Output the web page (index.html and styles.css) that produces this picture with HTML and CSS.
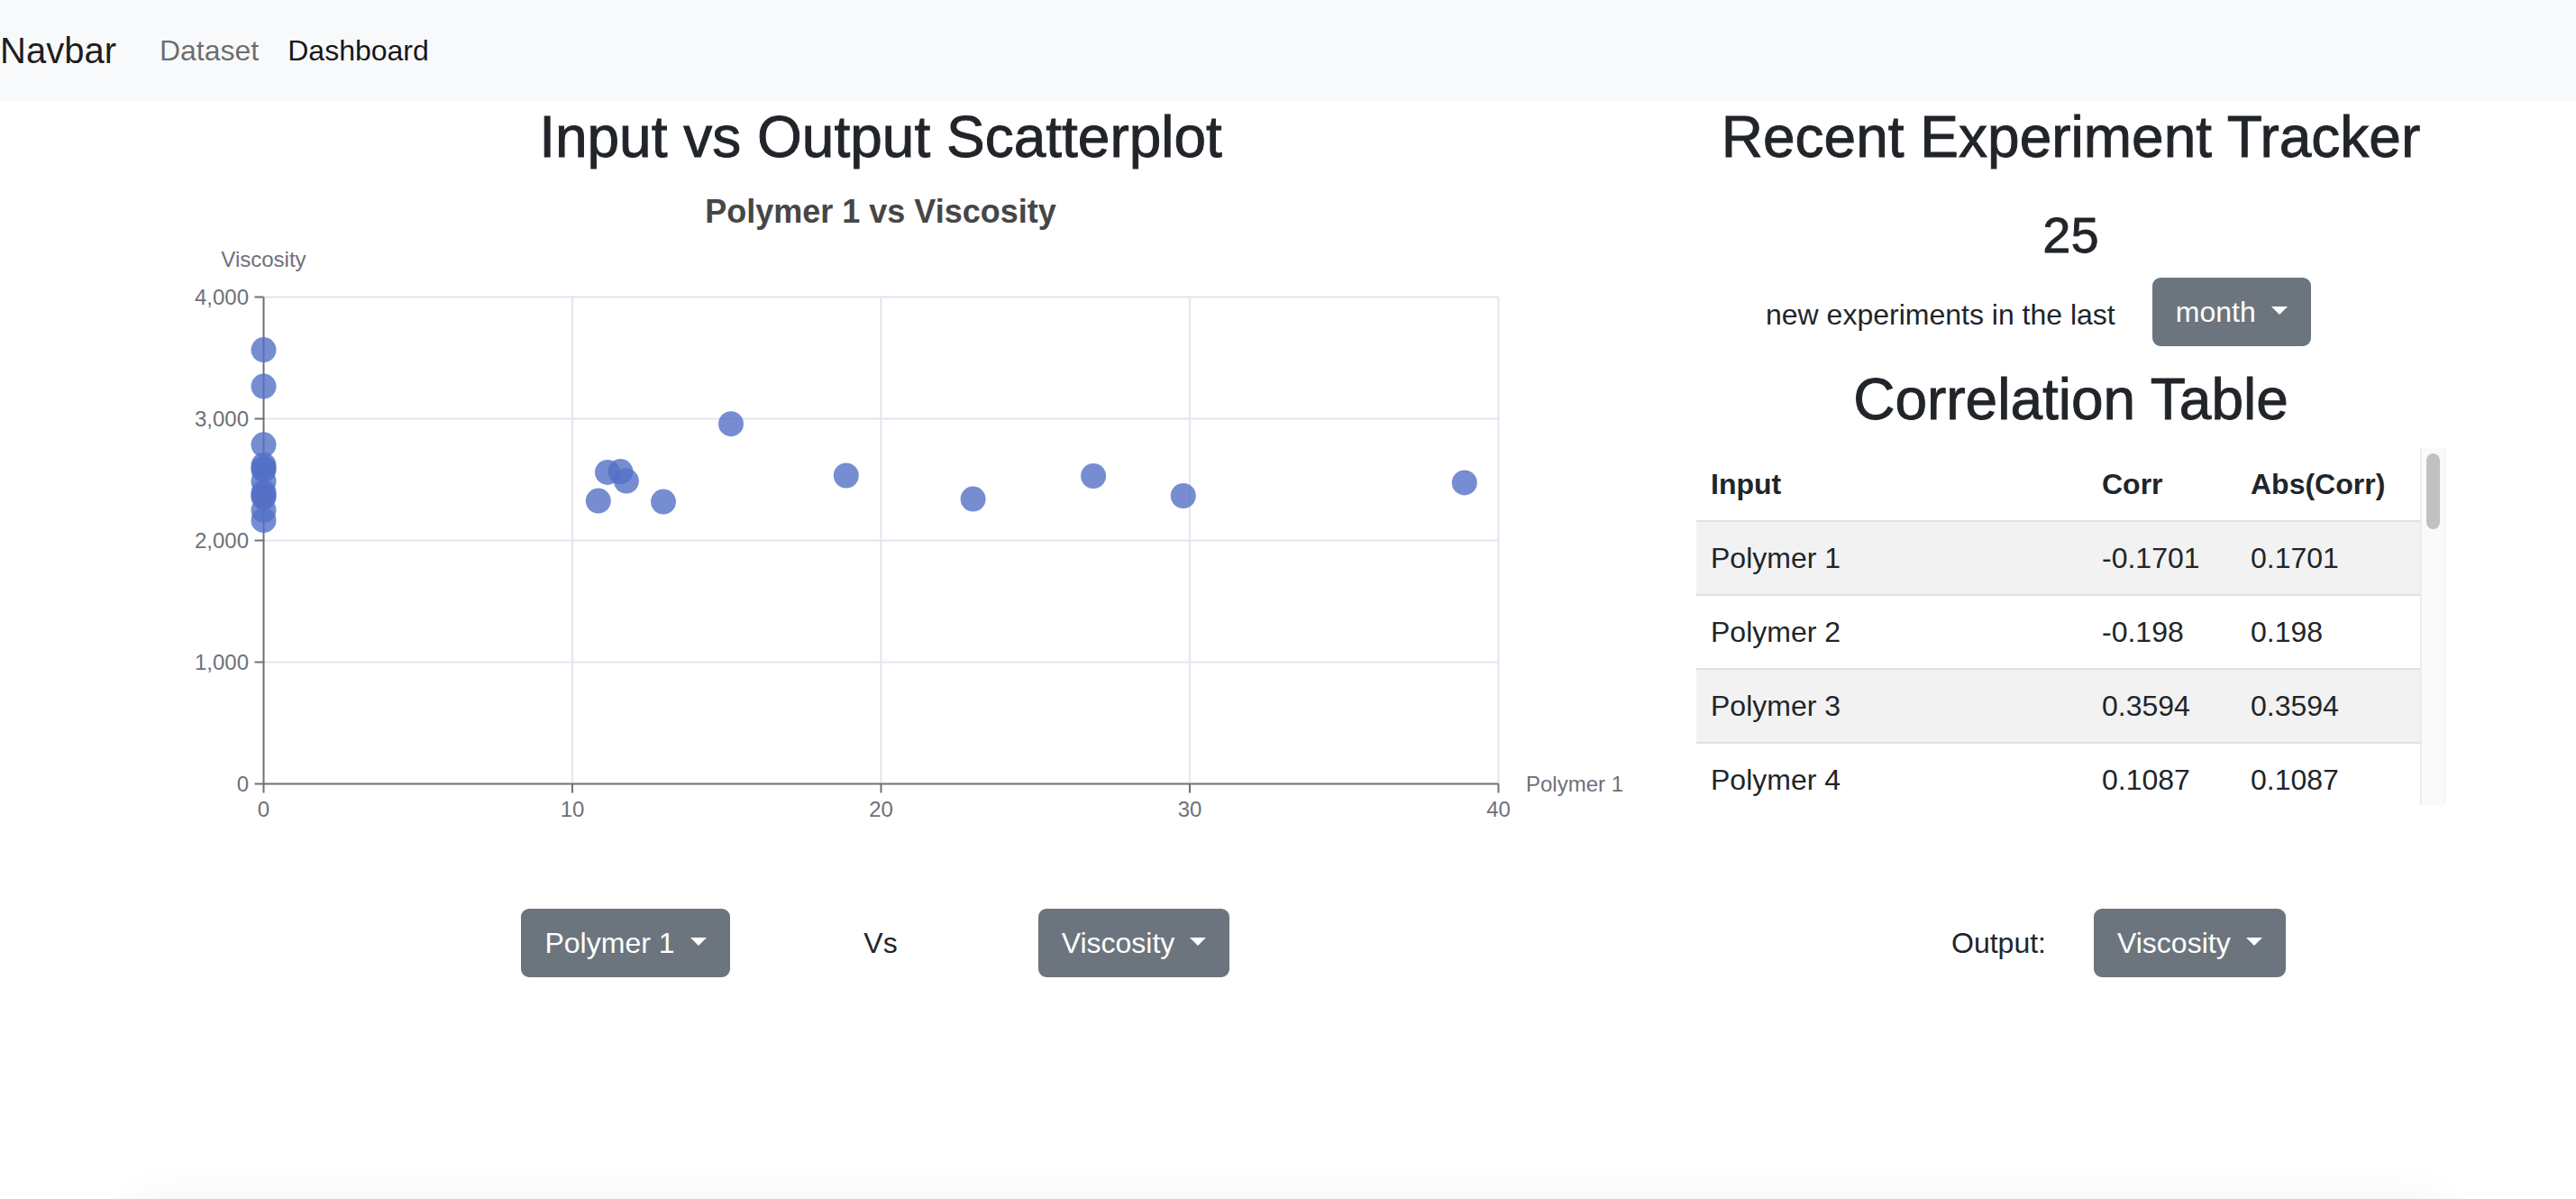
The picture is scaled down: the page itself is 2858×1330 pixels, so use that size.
FILE: index.html
```html
<!DOCTYPE html>
<html lang="en">
<head>
<meta charset="utf-8">
<title>Dashboard</title>
<link rel="stylesheet" href="styles.css">
</head>
<body>
<nav class="navbar">
  <a class="brand" href="#">Navbar</a>
  <a class="nav-link" href="#">Dataset</a>
  <a class="nav-link active" href="#">Dashboard</a>
</nav>

<main class="dash">
  <section class="scatter">
    <h2 class="title">Input vs Output Scatterplot</h2>
    <svg class="chart" width="1810" height="803" viewBox="0 0 1810 803" xmlns="http://www.w3.org/2000/svg">
      <text class="chart-title" x="905" y="42" text-anchor="middle">Polymer 1 vs Viscosity</text>
      <g class="grid">
        <line x1="220.5" y1="124.5" x2="1590.5" y2="124.5"/>
        <line x1="220.5" y1="259.5" x2="1590.5" y2="259.5"/>
        <line x1="220.5" y1="394.5" x2="1590.5" y2="394.5"/>
        <line x1="220.5" y1="529.5" x2="1590.5" y2="529.5"/>
        <line x1="563" y1="124.5" x2="563" y2="664.5"/>
        <line x1="905.5" y1="124.5" x2="905.5" y2="664.5"/>
        <line x1="1248" y1="124.5" x2="1248" y2="664.5"/>
        <line x1="1590.5" y1="124.5" x2="1590.5" y2="664.5"/>
      </g>
      <g class="axis">
        <line x1="220.5" y1="124.5" x2="220.5" y2="664.5"/>
        <line x1="220.5" y1="664.5" x2="1590.5" y2="664.5"/>
        <line x1="210.5" y1="124.5" x2="220.5" y2="124.5"/>
        <line x1="210.5" y1="259.5" x2="220.5" y2="259.5"/>
        <line x1="210.5" y1="394.5" x2="220.5" y2="394.5"/>
        <line x1="210.5" y1="529.5" x2="220.5" y2="529.5"/>
        <line x1="210.5" y1="664.5" x2="220.5" y2="664.5"/>
        <line x1="220.5" y1="664.5" x2="220.5" y2="674.5"/>
        <line x1="563" y1="664.5" x2="563" y2="674.5"/>
        <line x1="905.5" y1="664.5" x2="905.5" y2="674.5"/>
        <line x1="1248" y1="664.5" x2="1248" y2="674.5"/>
        <line x1="1590.5" y1="664.5" x2="1590.5" y2="674.5"/>
      </g>
      <g class="axis-label">
        <text x="204" y="132.5" text-anchor="end">4,000</text>
        <text x="204" y="267.5" text-anchor="end">3,000</text>
        <text x="204" y="402.5" text-anchor="end">2,000</text>
        <text x="204" y="537.5" text-anchor="end">1,000</text>
        <text x="204" y="672.5" text-anchor="end">0</text>
        <text x="220.5" y="701" text-anchor="middle">0</text>
        <text x="563" y="701" text-anchor="middle">10</text>
        <text x="905.5" y="701" text-anchor="middle">20</text>
        <text x="1248" y="701" text-anchor="middle">30</text>
        <text x="1590.5" y="701" text-anchor="middle">40</text>
        <text x="220.5" y="91" text-anchor="middle">Viscosity</text>
        <text x="1621" y="672.5">Polymer 1</text>
      </g>
      <g class="points">
        <circle cx="220.5" cy="183.1" r="14"/>
        <circle cx="220.5" cy="223.6" r="14"/>
        <circle cx="220.5" cy="288.3" r="14"/>
        <circle cx="220.5" cy="310.8" r="14"/>
        <circle cx="220.5" cy="314.2" r="14"/>
        <circle cx="220.5" cy="316.2" r="14"/>
        <circle cx="220.5" cy="329.0" r="14"/>
        <circle cx="220.5" cy="341.2" r="14"/>
        <circle cx="220.5" cy="344.5" r="14"/>
        <circle cx="220.5" cy="346.6" r="14"/>
        <circle cx="220.5" cy="360.9" r="14"/>
        <circle cx="220.5" cy="372.2" r="14"/>
        <circle cx="591.8" cy="350.6" r="14"/>
        <circle cx="602.0" cy="318.9" r="14"/>
        <circle cx="616.4" cy="318.1" r="14"/>
        <circle cx="622.9" cy="328.6" r="14"/>
        <circle cx="664.0" cy="351.6" r="14"/>
        <circle cx="739.0" cy="265.2" r="14"/>
        <circle cx="866.8" cy="322.5" r="14"/>
        <circle cx="1007.6" cy="348.6" r="14"/>
        <circle cx="1141.1" cy="323.0" r="14"/>
        <circle cx="1240.8" cy="345.0" r="14"/>
        <circle cx="1552.8" cy="330.4" r="14"/>
      </g>
    </svg>
  </section>

  <section class="tracker">
    <h2 class="title">Recent Experiment Tracker</h2>
    <h3 class="count">25</h3>
    <div class="recent">
      <span class="recent-label">new experiments in the last</span>
      <button class="btn caret" type="button">month</button>
    </div>
    <h2 class="title corr-title">Correlation Table</h2>
    <div class="table-box">
      <div class="table-clip">
        <table class="corr-table">
          <colgroup>
            <col class="c-input">
            <col class="c-corr">
            <col class="c-abs">
          </colgroup>
          <thead>
            <tr><th>Input</th><th>Corr</th><th>Abs(Corr)</th></tr>
          </thead>
          <tbody>
            <tr><td>Polymer 1</td><td>-0.1701</td><td>0.1701</td></tr>
            <tr><td>Polymer 2</td><td>-0.198</td><td>0.198</td></tr>
            <tr><td>Polymer 3</td><td>0.3594</td><td>0.3594</td></tr>
            <tr><td>Polymer 4</td><td>0.1087</td><td>0.1087</td></tr>
          </tbody>
        </table>
      </div>
      <div class="scroll-track" aria-hidden="true"><div class="scroll-thumb"></div></div>
    </div>
  </section>

  <div class="controls controls-left">
    <button class="btn caret" type="button">Polymer 1</button>
    <span class="vs">Vs</span>
    <button class="btn caret" type="button">Viscosity</button>
  </div>

  <div class="controls controls-right">
    <span class="output-label">Output:</span>
    <button class="btn caret" type="button">Viscosity</button>
  </div>
</main>

<section class="next-panel"></section>
</body>
</html>
```

FILE: styles.css
```css
html, body {
  margin: 0;
  padding: 0;
}

body {
  overflow: hidden;
  background: #fff;
  color: #212529;
  font-family: "Liberation Sans", Arial, sans-serif;
  font-size: 32px;
  line-height: 48px;
}

/* ---------- navbar ---------- */
.navbar {
  display: flex;
  align-items: center;
  height: 112px;
  box-sizing: border-box;
  padding: 16px 0;
  background: #f8f9fa;
}

.brand {
  font-size: 40px;
  line-height: 60px;
  padding: 10px 0;
  margin-right: 32px;
  color: rgba(0, 0, 0, 0.9);
  text-decoration: none;
}

.nav-link {
  padding: 16px;
  font-size: 32px;
  line-height: 48px;
  color: rgba(0, 0, 0, 0.58);
  text-decoration: none;
}

.nav-link.active {
  color: rgba(0, 0, 0, 0.92);
}

/* ---------- main layout ---------- */
.dash {
  display: grid;
  grid-template-columns: 1882px 831px;
  padding-top: 2px;
}

.scatter {
  padding-left: 72px;
  display: flex;
  flex-direction: column;
}

.title {
  margin: 0 0 16px;
  font-size: 64px;
  line-height: 76.8px;
  font-weight: 500;
  text-align: center;
  color: #212529;
  -webkit-text-stroke: 0.9px #212529;
}

.scatter .title {
  margin-bottom: 14px;
}

/* ---------- chart ---------- */
.chart {
  display: block;
  font-family: "Liberation Sans", Arial, sans-serif;
}

.chart-title {
  font-size: 36px;
  font-weight: 700;
  fill: #464646;
}

.grid line {
  stroke: #e0e6f1;
  stroke-width: 2;
}

.axis line {
  stroke: #6e7079;
  stroke-width: 2;
}

.axis-label text {
  font-size: 24px;
  fill: #6e7079;
}

.points circle {
  fill: #5470c6;
  fill-opacity: 0.8;
}

/* ---------- tracker ---------- */
.tracker {
  display: flex;
  flex-direction: column;
}

.count {
  margin: 20px 0 14px;
  font-size: 56px;
  line-height: 67.2px;
  font-weight: 500;
  text-align: center;
  -webkit-text-stroke: 0.8px #212529;
}

.recent {
  display: flex;
  align-items: center;
  gap: 41px;
  padding-left: 77px;
}

.recent-label {
  margin-top: 6px;
}

.corr-title {
  margin: 21px 0 15px;
}

.table-box {
  display: flex;
  height: 396px;
}

.table-clip {
  width: 803px;
  overflow: hidden;
}

.scroll-track {
  width: 28px;
  box-sizing: border-box;
  padding: 6px 5px 0 5px;
  background: #fafafa;
  border-left: 2px solid #ececec;
  border-right: 1px solid #f0f0f0;
}

.scroll-thumb {
  height: 84px;
  border-radius: 8px;
  background: #c1c1c1;
}

.corr-table {
  width: 803px;
  border-collapse: collapse;
  table-layout: fixed;
  color: #212529;
}

.c-input { width: 434px; }
.c-corr { width: 165px; }
.c-abs { width: 204px; }

.corr-table th,
.corr-table td {
  padding: 16px;
  line-height: 48px;
  text-align: left;
  border-bottom: 2px solid #dee2e6;
  white-space: nowrap;
}

.corr-table th {
  font-weight: 700;
}

.corr-table tbody tr:nth-child(odd) td {
  background: #f2f2f2;
}

/* ---------- buttons ---------- */
.btn {
  display: inline-block;
  box-sizing: border-box;
  height: 76px;
  padding: 12px 24px;
  font-family: inherit;
  font-size: 32px;
  line-height: 48px;
  color: #fff;
  background: #6c757d;
  border: 2px solid #6c757d;
  border-radius: 9px;
  white-space: nowrap;
  cursor: pointer;
}

.caret::after {
  content: "";
  display: inline-block;
  margin-left: 17px;
  vertical-align: 0.255em;
  border-top: 0.3em solid;
  border-right: 0.3em solid transparent;
  border-left: 0.3em solid transparent;
  border-bottom: 0;
}

/* ---------- control rows ---------- */
.controls-left {
  display: grid;
  grid-template-columns: 284px 282px 280px;
  justify-content: start;
  justify-items: center;
  align-items: center;
  padding-left: 552px;
}

.controls-right {
  display: flex;
  align-items: center;
  gap: 53px;
  padding-left: 283px;
}

.vs,
.output-label {
  color: #212529;
}

/* ---------- next panel (below the fold) ---------- */
.next-panel {
  margin: 246px 150px 0;
  height: 500px;
  border-radius: 16px;
  background: #fff;
  box-shadow: 0 0 48px rgba(0, 0, 0, 0.06);
}
```
